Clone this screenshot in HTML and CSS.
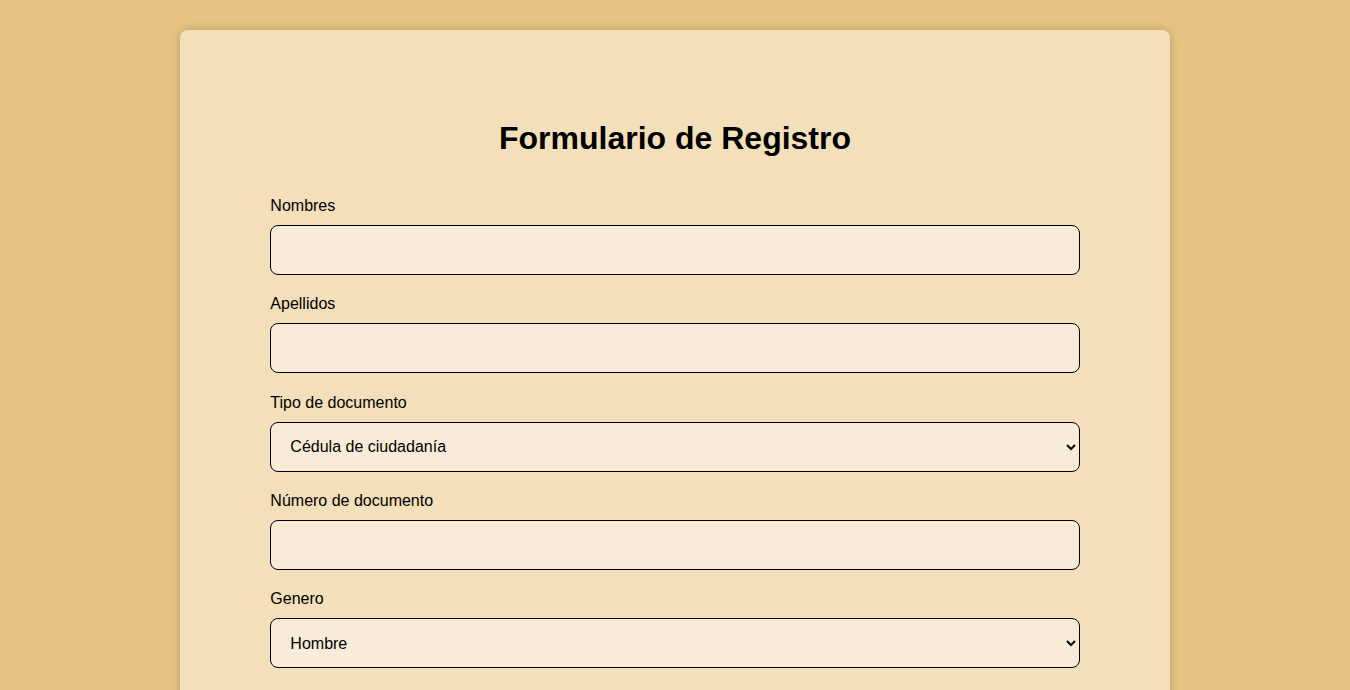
FILE: index.html
```html
<!DOCTYPE html>
<html lang="es">
<head>
<meta charset="utf-8">
<title>Formulario de Registro</title>
<link rel="stylesheet" href="styles.css">
</head>
<body>
<main class="card">
  <h1 class="title">Formulario de Registro</h1>
  <form class="form">
    <div class="field">
      <label class="label" for="nombres">Nombres</label>
      <input class="control" id="nombres" type="text">
    </div>
    <div class="field">
      <label class="label" for="apellidos">Apellidos</label>
      <input class="control" id="apellidos" type="text">
    </div>
    <div class="field">
      <label class="label" for="tipo">Tipo de documento</label>
      <select class="control select" id="tipo">
        <option>Cédula de ciudadanía</option>
        <option>Tarjeta de identidad</option>
        <option>Pasaporte</option>
      </select>
    </div>
    <div class="field">
      <label class="label" for="numero">Número de documento</label>
      <input class="control" id="numero" type="text">
    </div>
    <div class="field">
      <label class="label" for="genero">Genero</label>
      <select class="control select" id="genero">
        <option>Hombre</option>
        <option>Mujer</option>
      </select>
    </div>
  </form>
</main>
</body>
</html>
```
FILE: styles.css
```css
html, body {
  margin: 0;
  padding: 0;
}
body {
  background: #e5c482;
  font-family: "Liberation Sans", Arial, sans-serif;
  color: #000;
  padding-top: 30px;
  min-height: 100vh;
  box-sizing: border-box;
}
.card {
  width: 59.95%;
  margin: 0 auto;
  padding: 90px;
  background: #f3dfb9;
  border-radius: 8px;
  box-shadow: 0 0 10px rgba(0, 0, 0, 0.2);
}
.title {
  margin: 0 0 40px;
  font-size: 32px;
  font-weight: bold;
  text-align: center;
}
.form {
  display: flex;
  flex-direction: column;
}
.field {
  display: flex;
  flex-direction: column;
  margin-bottom: 20.25px;
}
.label {
  font-size: 16px;
  line-height: 18px;
  margin-bottom: 10px;
}
.control {
  box-sizing: border-box;
  width: 100%;
  height: 50px;
  border: 1px solid #000;
  border-radius: 8px;
  background: #f8ecd8;
  font-family: "Liberation Sans", Arial, sans-serif;
  font-size: 16px;
  color: #000;
  padding: 0 19px;
  outline: none;
}
.select {
  padding: 0 6px 0 15px;
}
```
